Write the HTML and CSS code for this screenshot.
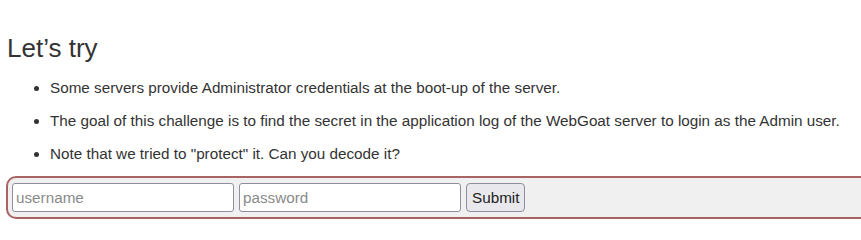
FILE: index.html
```html
<!DOCTYPE html>
<html>
<head>
<meta charset="utf-8">
<link rel="stylesheet" href="styles.css">
</head>
<body>
<div class="lesson">
  <h3 class="title">Let’s try</h3>
  <ul class="hints">
    <li><p>Some servers provide Administrator credentials at the boot-up of the server.</p></li>
    <li><p>The goal of this challenge is to find the secret in the application log of the WebGoat server to login as the Admin user.</p></li>
    <li><p>Note that we tried to "protect" it. Can you decode it?</p></li>
  </ul>
  <form class="attack" onsubmit="return false">
    <input class="field" type="text" placeholder="username">
    <input class="field" type="password" placeholder="password">
    <button class="submit" type="submit">Submit</button>
  </form>
</div>
</body>
</html>
```
FILE: styles.css
```css
html, body {
  margin: 0;
  padding: 0;
  background: #fff;
}
body {
  font-family: "Liberation Sans", Arial, sans-serif;
  color: #333;
  font-size: 15.25px;
  overflow: hidden;
}
.lesson {
  padding: 0 0 0 6px;
  width: 880px;
}
.title {
  font-size: 26px;
  font-weight: normal;
  margin: 0;
  padding-top: 33px;
  line-height: 31px;
  color: #333;
  padding-left: 1px;
}
.hints {
  margin: 13px 0 0;
  padding-left: 44px;
}
.hints li p {
  margin: 0 0 12px;
  line-height: 21px;
}
.attack {
  display: flex;
  align-items: center;
  gap: 5px;
  margin-top: 1px;
  border: 2px solid #a86464;
  border-radius: 10px;
  background: #f0f0f0;
  padding: 5px 4px;
  height: 29px;
}
.field {
  width: 222px;
  height: 29px;
  box-sizing: border-box;
  border: 1px solid #8f8f9d;
  border-radius: 3px;
  background: #fff;
  font-family: "Liberation Sans", Arial, sans-serif;
  font-size: 15.25px;
  padding: 0 3px;
  margin: 0;
}
.field::placeholder {
  color: #8a8a8a;
}
.submit {
  height: 29px;
  padding: 0 5px;
  margin: 0;
  border: 1px solid #8f8f9d;
  border-radius: 4px;
  background: #e9e9ed;
  color: #222;
  font-family: "Liberation Sans", Arial, sans-serif;
  font-size: 15.25px;
}
```
